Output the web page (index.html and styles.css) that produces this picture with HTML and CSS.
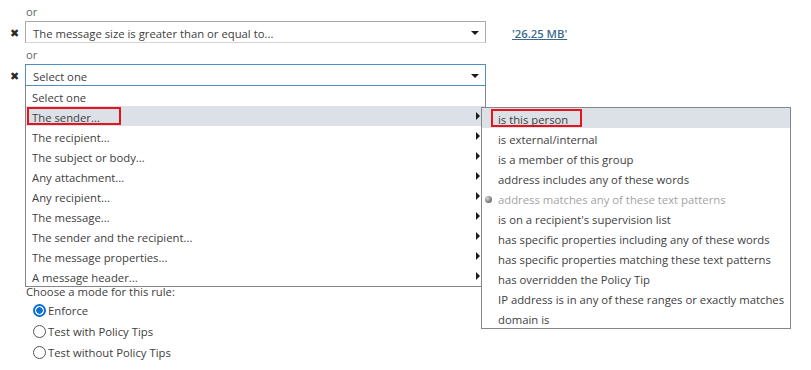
FILE: index.html
```html
<!DOCTYPE html>
<html lang="en">
<head>
  <meta charset="UTF-8">
  <title>Rule conditions</title>
  <link rel="stylesheet" href="styles.css">
</head>
<body>
  <div class="page">
    <div class="or">or</div>

    <!-- size condition -->
    <div class="cond-row">
      <span class="remove">&#10006;</span>
      <div class="select">
        <span class="select-text">The message size is greater than or equal to...</span>
        <span class="caret"></span>
      </div>
      <a class="value" href="#">'26.25 MB'</a>
    </div>

    <div class="or">or</div>

    <!-- new condition, dropdown open -->
    <div class="cond-row">
      <span class="remove">&#10006;</span>
      <div class="select-wrap">
        <div class="select focused">
          <span class="select-text">Select one</span>
          <span class="caret"></span>
        </div>

        <ul class="menu">
          <li>Select one</li>
          <li class="has-sub active"><span class="marked">The sender...</span></li>
          <li class="has-sub">The recipient...</li>
          <li class="has-sub">The subject or body...</li>
          <li class="has-sub">Any attachment...</li>
          <li class="has-sub">Any recipient...</li>
          <li class="has-sub">The message...</li>
          <li class="has-sub">The sender and the recipient...</li>
          <li class="has-sub">The message properties...</li>
          <li class="has-sub">A message header...</li>
        </ul>

        <ul class="submenu">
          <li class="active"><span class="marked">is this person</span></li>
          <li>is external/internal</li>
          <li>is a member of this group</li>
          <li>address includes any of these words</li>
          <li class="disabled"><span class="bullet"></span>address matches any of these text patterns</li>
          <li>is on a recipient's supervision list</li>
          <li>has specific properties including any of these words</li>
          <li>has specific properties matching these text patterns</li>
          <li>has overridden the Policy Tip</li>
          <li>IP address is in any of these ranges or exactly matches</li>
          <li>domain is</li>
        </ul>
      </div>
    </div>

    <!-- mode -->
    <div class="mode">
      <div class="mode-label">Choose a mode for this rule:</div>
      <label class="radio"><span class="circle checked"></span>Enforce</label>
      <label class="radio"><span class="circle"></span>Test with Policy Tips</label>
      <label class="radio"><span class="circle"></span>Test without Policy Tips</label>
    </div>
  </div>
</body>
</html>
```

FILE: styles.css
```css
body, html {
  margin: 0;
  padding: 0;
  background: #ffffff;
  font-family: "Segoe UI", "Open Sans", Arial, sans-serif;
  font-size: 11.3px;
  color: #404040;
}

.page {
  padding-left: 10px;
}

.or {
  height: 21px;
  line-height: 24px;
  padding-left: 16px;
  color: #666666;
}

.cond-row {
  display: flex;
  align-items: center;
  height: 22px;
}

.remove {
  width: 15px;
  font-size: 11px;
  line-height: 22px;
  padding-top: 1px;
  color: #2b2b2b;
}

/* Select boxes */
.select {
  box-sizing: border-box;
  width: 461px;
  height: 22px;
  border: 1px solid #a9a9a9;
  border-bottom-color: #d4d4d4;
  display: flex;
  align-items: center;
  justify-content: space-between;
  padding: 0 6px 0 7px;
  background: #fff;
}

.select-text {
  padding-top: 2px;
}

.select.focused {
  border-color: #4f8fc4;
}

.caret {
  width: 0;
  height: 0;
  border-left: 4px solid transparent;
  border-right: 4px solid transparent;
  border-top: 4px solid #1a1a1a;
  margin-top: 1px;
}

.value {
  margin-left: 26px;
  padding-top: 2px;
  color: #3d6a8c;
  font-weight: 600;
  text-decoration: underline;
}

.select-wrap {
  position: relative;
}

/* Dropdown list */
.menu, .submenu {
  list-style: none;
  margin: 0;
  padding: 0;
  background: #fff;
  position: absolute;
  z-index: 2;
}

.menu {
  top: 22px;
  left: 0;
  width: 461px;
  box-sizing: border-box;
  border: 1px solid #868686;
  border-top: none;
}

.menu li, .submenu li {
  box-sizing: border-box;
  height: 20px;
  line-height: 20px;
  padding-top: 2px;
  position: relative;
  white-space: nowrap;
}

.menu li {
  padding-left: 6px;
}

.menu li.has-sub::after {
  content: "";
  position: absolute;
  right: 5px;
  top: 6px;
  border-top: 4px solid transparent;
  border-bottom: 4px solid transparent;
  border-left: 4px solid #1a1a1a;
}

.menu li.active, .submenu li.active {
  background: #dce0e7;
}

li.active {
  padding-top: 0;
}

.marked {
  display: inline-block;
  box-sizing: border-box;
  height: 18px;
  line-height: 18px;
  margin-top: 1px;
  border: 2px solid #e8141b;
  vertical-align: top;
}

.menu .marked {
  margin-left: -5px;
  padding: 0 10px 0 3px;
  width: 94px;
}

/* Sub menu */
.submenu {
  top: 43px;
  left: 456px;
  width: 310px;
  box-sizing: border-box;
  border: 1px solid #868686;
  z-index: 3;
}

.submenu li {
  padding-left: 16px;
}

.submenu .marked {
  margin-left: -7px;
  padding: 0 10px 0 5px;
  width: 91px;
}

.submenu li.disabled {
  color: #a3a3a3;
}

.bullet {
  position: absolute;
  left: 3px;
  top: 8px;
  width: 7px;
  height: 7px;
  border-radius: 50%;
  background: radial-gradient(circle at 35% 35%, #d8d8d8, #6e6e6e 70%);
}

/* Mode radios */
.mode {
  margin-top: 193px;
  padding-left: 16px;
}

.mode-label {
  height: 21px;
  line-height: 25px;
}

.radio {
  display: flex;
  align-items: center;
  height: 21px;
  padding-left: 7px;
}

.circle {
  box-sizing: border-box;
  width: 13px;
  height: 13px;
  border: 1px solid #555;
  border-radius: 50%;
  margin-right: 2px;
  margin-top: -1px;
  background: #fff;
}

.circle.checked {
  border: 2px solid #0a6fd6;
  background: radial-gradient(circle, #0a6fd6 3px, #fff 3.5px);
}
```
